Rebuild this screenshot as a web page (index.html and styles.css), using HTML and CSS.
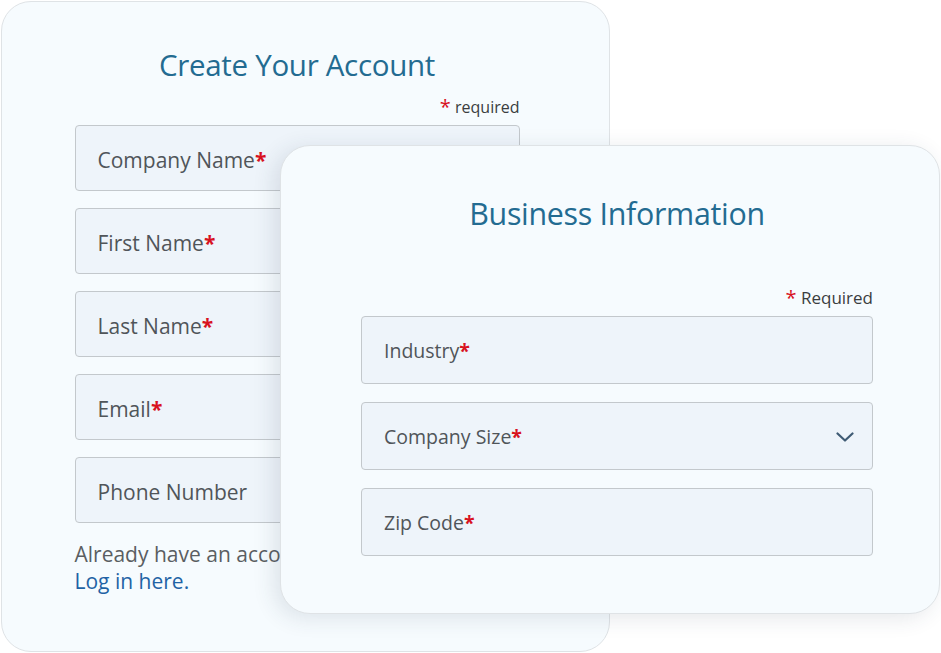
FILE: index.html
```html
<!DOCTYPE html>
<html lang="en">
<head>
<meta charset="utf-8">
<title>Create Your Account</title>
<link rel="stylesheet" href="styles.css">
</head>
<body>
<div class="stage">
  <section class="card card-back">
    <h1 class="title">Create Your Account</h1>
    <p class="req req-back"><span class="star">*</span> required</p>
    <div class="fields fields-back">
      <div class="field"><span>Company Name</span><span class="star">*</span></div>
      <div class="field"><span>First Name</span><span class="star">*</span></div>
      <div class="field"><span>Last Name</span><span class="star">*</span></div>
      <div class="field"><span>Email</span><span class="star">*</span></div>
      <div class="field"><span>Phone Number</span></div>
    </div>
    <p class="login">Already have an account?<br><a href="#">Log in here.</a></p>
  </section>
  <section class="card card-front">
    <h2 class="title title-front">Business Information</h2>
    <p class="req req-front"><span class="star">*</span> Required</p>
    <div class="fields fields-front">
      <div class="field field-front"><span>Industry</span><span class="star">*</span></div>
      <div class="field field-front select"><span>Company Size</span><span class="star">*</span>
        <svg class="chev" width="18" height="10" viewBox="0 0 18 10"><path d="M1.5 1.5 L9 8.5 L16.5 1.5" fill="none" stroke="#3f5b74" stroke-width="2.2" stroke-linecap="round" stroke-linejoin="round"/></svg>
      </div>
      <div class="field field-front"><span>Zip Code</span><span class="star">*</span></div>
    </div>
  </section>
</div>
</body>
</html>
```

FILE: styles.css
```css
* { box-sizing: border-box; }
html, body { margin: 0; padding: 0; background: #ffffff; }
body {
  font-family: "Open Sans", "Noto Sans", "Liberation Sans", sans-serif;
  color: #555a5e;
  width: 941px;
  height: 653px;
  overflow: hidden;
}
.stage {
  display: grid;
  grid-template-columns: 941px;
  grid-template-rows: 653px;
}
.card {
  grid-row: 1;
  grid-column: 1;
  background: #f6fbfe;
  border: 1.5px solid #dfe3e6;
}
.card-back {
  margin: 1px 0 0 1px;
  width: 609px;
  height: 651px;
  border-radius: 30px;
  padding: 0 0 0 72.5px;
}
.card-front {
  margin: 145px 0 0 280px;
  width: 660px;
  height: 469px;
  border-radius: 30px;
  padding: 0 0 0 80px;
  box-shadow: -6px 4px 22px rgba(40, 60, 80, 0.12);
}
.title {
  margin: 0;
  font-weight: 400;
  color: #236b91;
  text-align: center;
  letter-spacing: -0.3px;
}
.card-back .title {
  width: 445px;
  font-size: 29.5px;
  padding-top: 43px;
  line-height: 40px;
}
.title-front {
  width: 512px;
  font-size: 30.4px;
  padding-top: 48px;
  line-height: 40px;
}
.req {
  margin: 0;
  text-align: right;
  color: #3a3d40;
  font-size: 16px;
}
.req-back { width: 445px; margin-top: 11px; line-height: 22px; }
.req-front { width: 512px; margin-top: 52px; line-height: 24px; font-size: 17px; }
.star { color: #d8121f; }
.req .star { font-size: 20px; vertical-align: -1px; }
.fields { display: flex; flex-direction: column; }
.fields-back { gap: 17px; margin-top: 7px; width: 445px; }
.fields-front { gap: 18px; margin-top: 6px; width: 512px; }
.field {
  height: 66px;
  background: #eef4fa;
  border: 1.5px solid #c3c8cc;
  border-radius: 4px;
  display: flex;
  align-items: center;
  padding: 3px 0 0 22px;
  font-size: 21px;
  color: #505559;
}
.field .star { font-weight: 700; }
.field-front { height: 68px; font-size: 19.5px; padding-top: 0; }
.select { position: relative; }
.chev { position: absolute; right: 18px; top: 29px; }
.login {
  margin: 18px 0 0 0;
  font-size: 21px;
  line-height: 27px;
  color: #5a5e62;
}
.login a { color: #1f63a5; text-decoration: none; }
```
